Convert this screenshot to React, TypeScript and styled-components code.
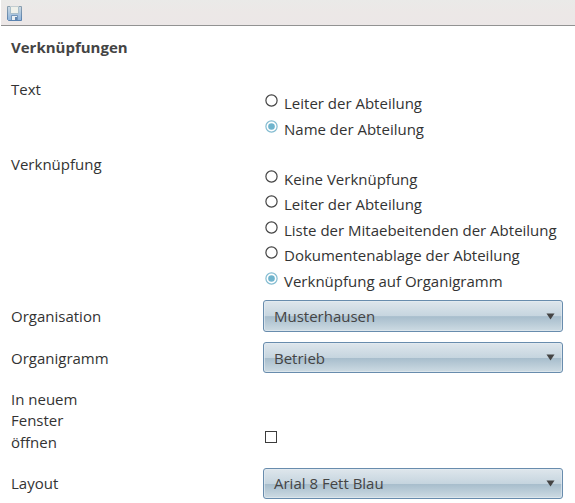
import React from "react";
import styled, { createGlobalStyle } from "styled-components";

const GlobalStyle = createGlobalStyle`
  * { box-sizing: border-box; }
  body { margin: 0; background: #fff; overflow: hidden; }
`;

const Page = styled.main`
  height: 503px;
  overflow: hidden;
  background: #fff;
  color: #333;
  font: 15px/21.4px "Open Sans", sans-serif;
`;

const Toolbar = styled.header`
  height: 26px;
  margin-left: 1px;
  padding: 6px 0 0 6px;
  border-bottom: 1px solid #929292;
  background: linear-gradient(#eaeae8, #ece8e7 45%, #ece7e7);
`;

const SaveButton = styled.button`
  display: block;
  width: 15px;
  height: 15px;
  padding: 0;
  border: 0;
  background: none;
  svg { display: block; }
`;

const Title = styled.h1`
  height: 53px;
  margin: 0;
  padding: 11px 0 0 11px;
  font-size: 15px;
  font-weight: 700;
  line-height: 21px;
  color: #444;
`;

const Row = styled.section<{ $height: number }>`
  display: grid;
  grid-template-columns: 252px 300px;
  height: ${(p) => p.$height}px;
  padding-left: 11px;
`;

const Label = styled.div<{ $top?: number }>`
  width: 90px;
  padding-top: ${(p) => p.$top ?? 0}px;
`;

const Options = styled.div<{ $top: number }>`
  padding-top: ${(p) => p.$top}px;
`;

const Option = styled.label<{ $height: number }>`
  display: flex;
  align-items: flex-start;
  height: ${(p) => p.$height}px;
  padding: 3px 0 0 2px;
  line-height: 21px;
  white-space: nowrap;
`;

const RadioMark = styled.svg`
  flex: none;
  width: 13px;
  height: 13px;
  margin: 1px 6px 0 0;
`;

const Select = styled.button<{ $height?: number; $textTop?: number }>`
  display: flex;
  align-items: center;
  justify-content: space-between;
  width: 300px;
  height: ${(p) => p.$height ?? 31}px;
  padding: 0 7px 0 10px;
  border: 1px solid #688cad;
  border-radius: 3px;
  background: linear-gradient(#dee6ec, #c6d5df 50%, #a7bdcc 52%, #cddbe3);
  box-shadow: inset 0 0 0 1px #e4ecf2aa;
  color: #444;
  font: 15px/21px "Open Sans", sans-serif;
  text-align: left;
  span { padding-top: ${(p) => p.$textTop ?? 0}px; }
`;

const CheckBox = styled.span`
  display: block;
  width: 12px;
  height: 12px;
  margin: 42px 0 0 2px;
  border: 1px solid #3c3c3c;
  background: #fff;
`;

function Radio({ checked, height = 25.4, children }: { checked?: boolean; height?: number; children: string }) {
  return (
    <Option $height={height}>
      <RadioMark viewBox="0 0 13 13">
        <circle cx="6.5" cy="6.5" r="5.6" fill="#fff" stroke={checked ? "#84bcd1" : "#444"} strokeWidth="1.2" />
        {checked && <circle cx="6.5" cy="6.5" r="3.3" fill="#70b4cd" />}
      </RadioMark>
      <span>{children}</span>
    </Option>
  );
}

function Dropdown({ value, height, textTop }: { value: string; height?: number; textTop?: number }) {
  return (
    <Select $height={height} $textTop={textTop}>
      <span>{value}</span>
      <svg width="9" height="7" viewBox="0 0 9 7">
        <path d="M.5 .5h8L4.5 6.5z" fill="#444" />
      </svg>
    </Select>
  );
}

function SaveIcon() {
  return (
    <svg width="15" height="15" viewBox="0 0 15 15">
      <defs>
        <linearGradient id="disk" x1="0" y1="0" x2="0" y2="1">
          <stop offset="0" stopColor="#ccd9e2" />
          <stop offset="1" stopColor="#8fb4dc" />
        </linearGradient>
        <linearGradient id="edge" x1="0" y1="0" x2="0" y2="1">
          <stop offset="0" stopColor="#8a9fae" />
          <stop offset="1" stopColor="#5b83b0" />
        </linearGradient>
      </defs>
      <path d="M.5 .5h14v14H1.5l-1-1z" fill="url(#disk)" stroke="url(#edge)" />
      <path d="M3 0h9v7H3z" fill="#eff1ea" />
      <path d="M3.5 .5v7h8v-7" fill="none" stroke="#a9bfca" />
      <path d="M3 .5h9" stroke="#c3cdd0" />
      <path d="M4 10h7v4H4z" fill="#e9eff3" />
      <path d="M4.5 14v-4.5h6V14" fill="none" stroke="#7397b8" />
      <path d="M8 11h2v3H8z" fill="#6086b0" />
    </svg>
  );
}

export default function App() {
  return (
    <Page>
      <GlobalStyle />
      <Toolbar>
        <SaveButton aria-label="Speichern">
          <SaveIcon />
        </SaveButton>
      </Toolbar>
      <Title>Verknüpfungen</Title>
      <Row $height={75}>
        <Label>Text</Label>
        <Options $top={11}>
          <Radio height={26}>Leiter der Abteilung</Radio>
          <Radio checked>Name der Abteilung</Radio>
        </Options>
      </Row>
      <Row $height={146}>
        <Label>Verknüpfung</Label>
        <Options $top={12}>
          <Radio>Keine Verknüpfung</Radio>
          <Radio>Leiter der Abteilung</Radio>
          <Radio>Liste der Mitaebeitenden der Abteilung</Radio>
          <Radio>Dokumentenablage der Abteilung</Radio>
          <Radio checked>Verknüpfung auf Organigramm</Radio>
        </Options>
      </Row>
      <Row $height={42}>
        <Label $top={6}>Organisation</Label>
        <Dropdown value="Musterhausen" height={32} />
      </Row>
      <Row $height={47}>
        <Label $top={6}>Organigramm</Label>
        <Dropdown value="Betrieb" textTop={2} />
      </Row>
      <Row $height={79}>
        <Label>In neuem Fenster öffnen</Label>
        <CheckBox role="checkbox" aria-checked="false" />
      </Row>
      <Row $height={35}>
        <Label $top={5}>Layout</Label>
        <Dropdown value="Arial 8 Fett Blau" />
      </Row>
    </Page>
  );
}
